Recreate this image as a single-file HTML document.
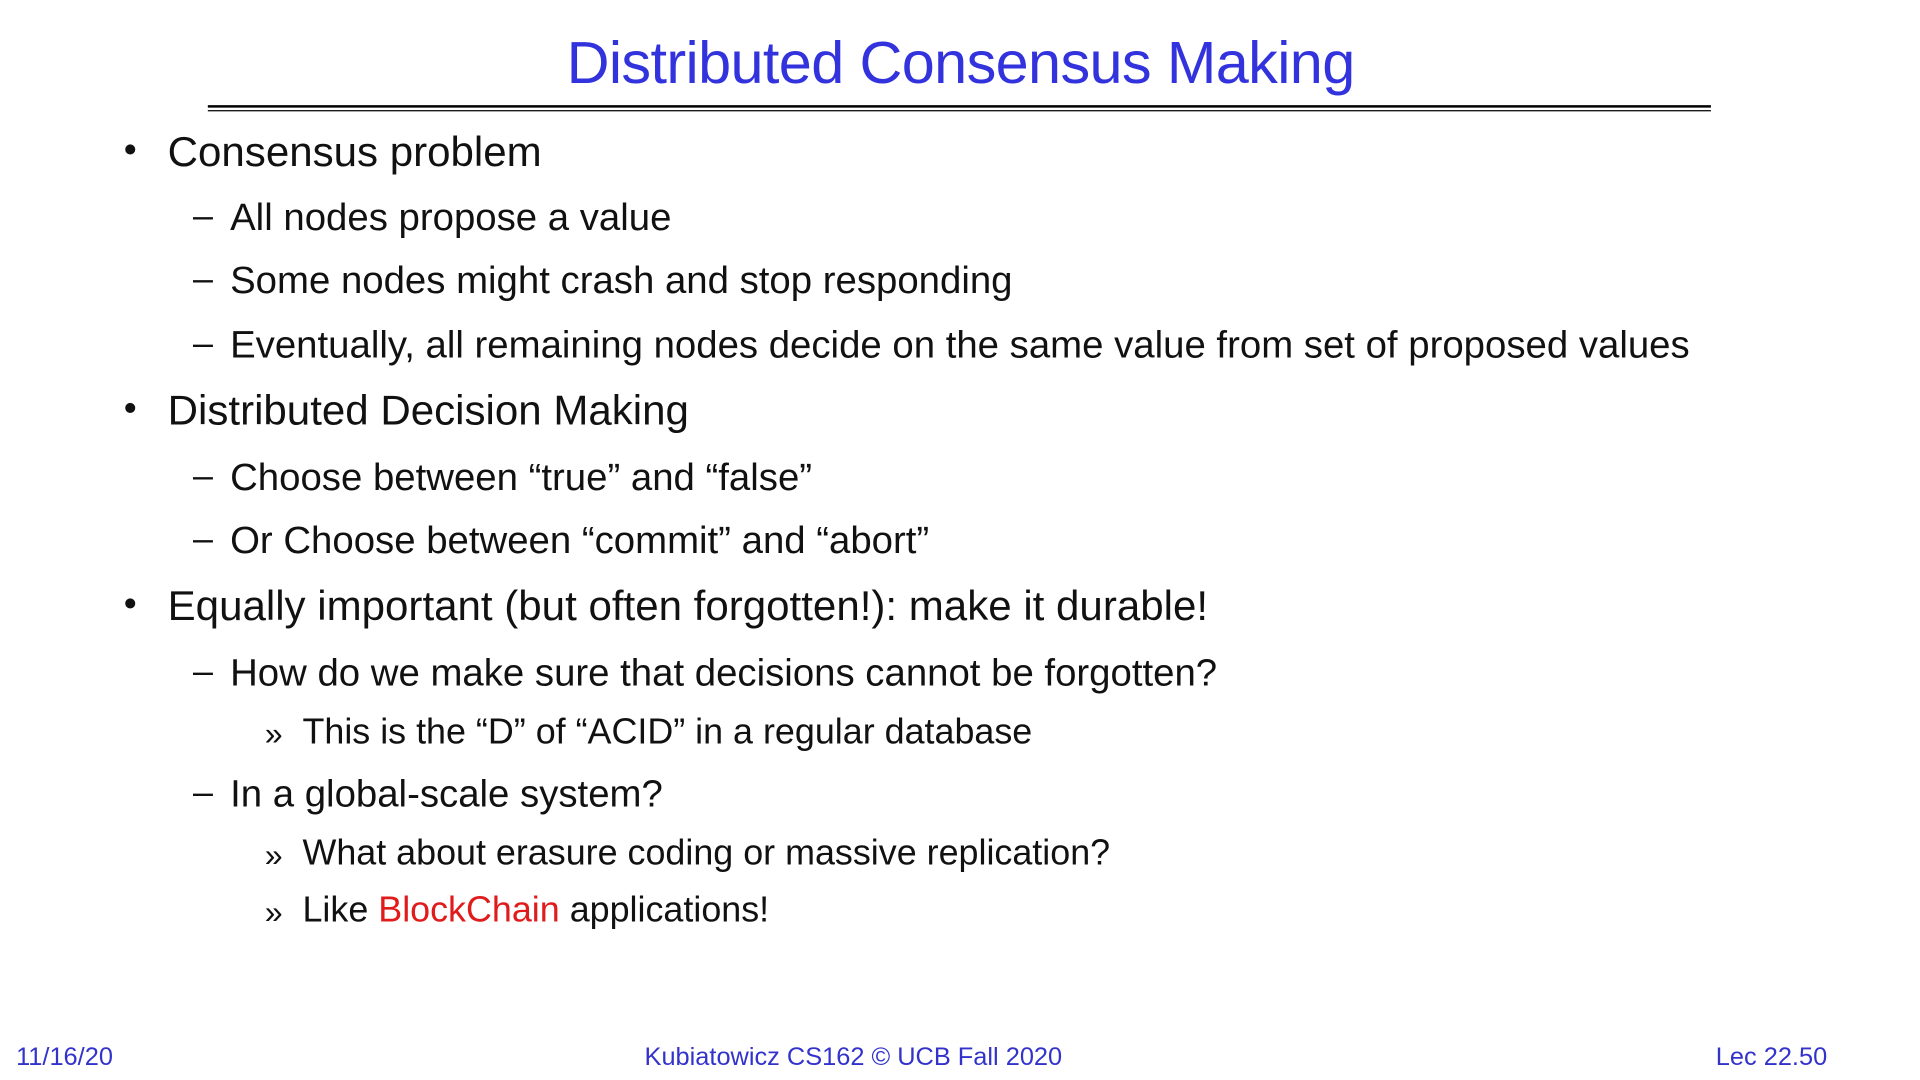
<!DOCTYPE html>
<html><head><meta charset="utf-8"><style>
html,body{margin:0;padding:0;background:#fff;width:1920px;height:1080px;overflow:hidden}
#s{position:absolute;left:0;top:0;width:1552px;height:873px;transform:scale(1.2371);transform-origin:0 0;font-family:"Liberation Sans",sans-serif;color:#111}
.t{position:absolute;white-space:nowrap;line-height:1;}
.title{left:0;width:1553px;text-align:center;top:27.5px;font-size:48px;color:#3333dd;letter-spacing:-0.5px}
.r1{position:absolute;left:168px;width:1215px;top:85px;height:1.6px;background:#000}
.r2{position:absolute;left:168px;width:1215px;top:88.5px;height:1.2px;background:#000}
.l1{font-size:34px;left:135.5px}
.l2{font-size:31px;left:186px}
.l3{font-size:29px;left:244.5px}
.b1{font-size:30px;left:100px}
.d2{font-size:29px;left:156px}
.d3{font-size:26px;left:214px}
.f{font-size:20.5px;color:#3333cc;top:845px}
.red{color:#e01b1b}
</style></head><body><div id="s">
<div class="t title">Distributed Consensus Making</div>
<div class="r1"></div><div class="r2"></div>

<div class="t b1" style="top:107px">•</div><div class="t l1" style="top:106px">Consensus problem</div>
<div class="t d2" style="top:161px">–</div><div class="t l2" style="top:160px">All nodes propose a value</div>
<div class="t d2" style="top:212px">–</div><div class="t l2" style="top:211px">Some nodes might crash and stop responding</div>
<div class="t d2" style="top:264px">–</div><div class="t l2" style="top:263px">Eventually, all remaining nodes decide on the same value from set of proposed values</div>
<div class="t b1" style="top:316px">•</div><div class="t l1" style="top:315px">Distributed Decision Making</div>
<div class="t d2" style="top:371px">–</div><div class="t l2" style="top:370px">Choose between “true” and “false”</div>
<div class="t d2" style="top:422px">–</div><div class="t l2" style="top:421px">Or Choose between “commit” and “abort”</div>
<div class="t b1" style="top:474px">•</div><div class="t l1" style="top:473px">Equally important (but often forgotten!): make it durable!</div>
<div class="t d2" style="top:529px">–</div><div class="t l2" style="top:528px">How do we make sure that decisions cannot be forgotten?</div>
<div class="t d3" style="top:580px">»</div><div class="t l3" style="top:578px">This is the “D” of “ACID” in a regular database</div>
<div class="t d2" style="top:627px">–</div><div class="t l2" style="top:626px">In a global-scale system?</div>
<div class="t d3" style="top:678px">»</div><div class="t l3" style="top:676px">What about erasure coding or massive replication?</div>
<div class="t d3" style="top:724px">»</div><div class="t l3" style="top:722px">Like <span class="red">BlockChain</span> applications!</div>

<div class="t f" style="left:13px">11/16/20</div>
<div class="t f" style="left:521px">Kubiatowicz CS162 © UCB Fall 2020</div>
<div class="t f" style="right:75px">Lec 22.50</div>
</div></body></html>
